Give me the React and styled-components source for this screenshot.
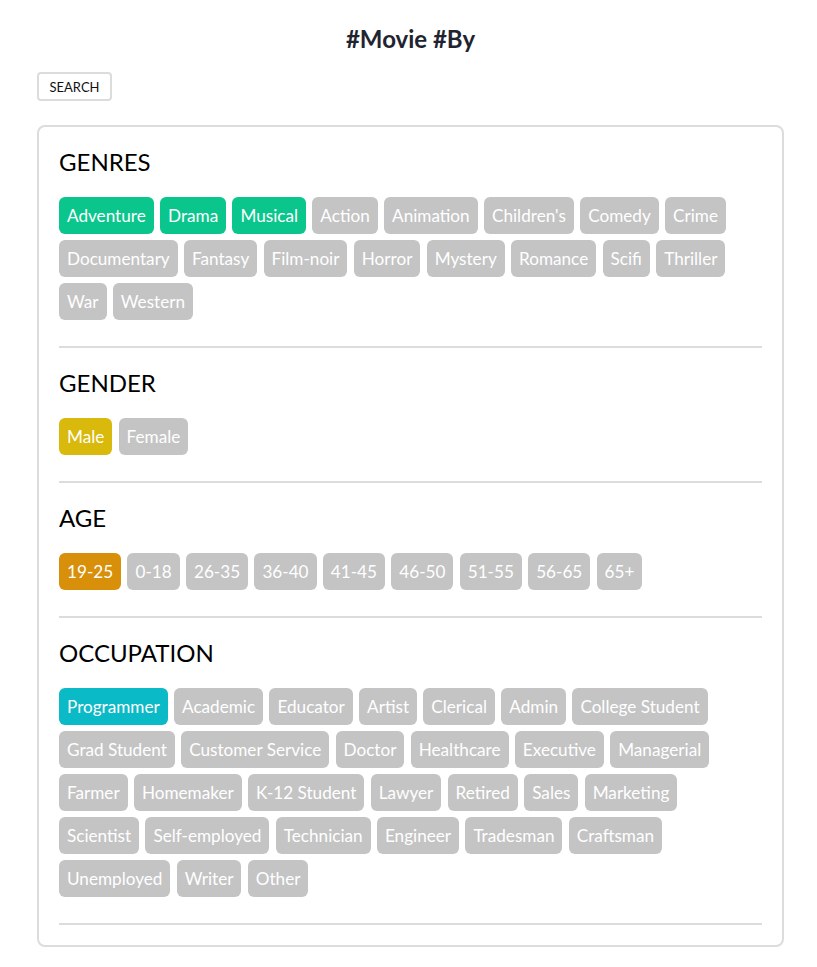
import React, { useState } from 'react'
import styled, { createGlobalStyle } from 'styled-components'

const GlobalStyle = createGlobalStyle`
  body {
    margin: 0;
    background: #fff;
    font-family: Lato, 'Noto Sans', sans-serif;
  }
`

const Page = styled.div`
  padding: 0 33px 20px 37px;
`

const Title = styled.h1`
  margin: 0;
  padding-top: 24px;
  font-size: 24px;
  font-weight: 700;
  line-height: 29px;
  text-align: center;
  color: #1f2430;
`

const SearchButton = styled.button`
  display: block;
  margin-top: 19px;
  height: 29px;
  width: 75px;
  padding: 0;
  background: #fff;
  border: 2px solid #dcdcdc;
  border-radius: 4px;
  font-family: Lato, sans-serif;
  font-size: 13px;
  color: #111;
`

const Panel = styled.div`
  margin-top: 24px;
  border: 2px solid #dcdcdc;
  border-radius: 8px;
  padding: 20px;
`

const Heading = styled.h2`
  margin: 0;
  font-size: 24px;
  font-weight: 400;
  line-height: 29px;
  color: #000;
`

const TagList = styled.div`
  display: flex;
  flex-wrap: wrap;
  column-gap: 6.3px;
  row-gap: 6px;
  margin-top: 21px;
`

const Tag = styled.span`
  display: inline-block;
  height: 37px;
  box-sizing: border-box;
  padding: 0 8px;
  line-height: 37px;
  border-radius: 6px;
  font-size: 17.15px;
  color: #fff;
  background: ${p => (p.$active ? p.$color : '#c4c4c4')};
  cursor: pointer;
`

const Divider = styled.hr`
  border: 0;
  height: 2px;
  background: #dcdcdc;
  margin: 26px 0 ${p => (p.$last ? '0' : '20px')} 0;
`

const sections = [
  {
    name: 'GENRES',
    color: '#0ac68c',
    active: ['Adventure', 'Drama', 'Musical'],
    items: [
      'Adventure', 'Drama', 'Musical', 'Action', 'Animation', "Children's", 'Comedy', 'Crime',
      'Documentary', 'Fantasy', 'Film-noir', 'Horror', 'Mystery', 'Romance', 'Scifi', 'Thriller',
      'War', 'Western',
    ],
  },
  {
    name: 'GENDER',
    color: '#d9b90b',
    active: ['Male'],
    items: ['Male', 'Female'],
  },
  {
    name: 'AGE',
    color: '#d8900b',
    active: ['19-25'],
    items: ['19-25', '0-18', '26-35', '36-40', '41-45', '46-50', '51-55', '56-65', '65+'],
  },
  {
    name: 'OCCUPATION',
    color: '#0abac6',
    active: ['Programmer'],
    items: [
      'Programmer', 'Academic', 'Educator', 'Artist', 'Clerical', 'Admin', 'College Student',
      'Grad Student', 'Customer Service', 'Doctor', 'Healthcare', 'Executive', 'Managerial',
      'Farmer', 'Homemaker', 'K-12 Student', 'Lawyer', 'Retired', 'Sales', 'Marketing',
      'Scientist', 'Self-employed', 'Technician', 'Engineer', 'Tradesman', 'Craftsman',
      'Unemployed', 'Writer', 'Other',
    ],
  },
]

export default function App() {
  const [selected, setSelected] = useState(() =>
    Object.fromEntries(sections.map(s => [s.name, s.active]))
  )

  const toggle = (section, item) => {
    setSelected(prev => {
      const cur = prev[section]
      const next = cur.includes(item) ? cur.filter(i => i !== item) : [...cur, item]
      return { ...prev, [section]: next }
    })
  }

  return (
    <Page>
      <GlobalStyle />
      <Title>#Movie #By</Title>
      <SearchButton>SEARCH</SearchButton>
      <Panel>
        {sections.map((s, idx) => (
          <div key={s.name}>
            <Heading>{s.name}</Heading>
            <TagList>
              {s.items.map(item => (
                <Tag
                  key={item}
                  $color={s.color}
                  $active={selected[s.name].includes(item)}
                  onClick={() => toggle(s.name, item)}
                >
                  {item}
                </Tag>
              ))}
            </TagList>
            <Divider $last={idx === sections.length - 1} />
          </div>
        ))}
      </Panel>
    </Page>
  )
}
